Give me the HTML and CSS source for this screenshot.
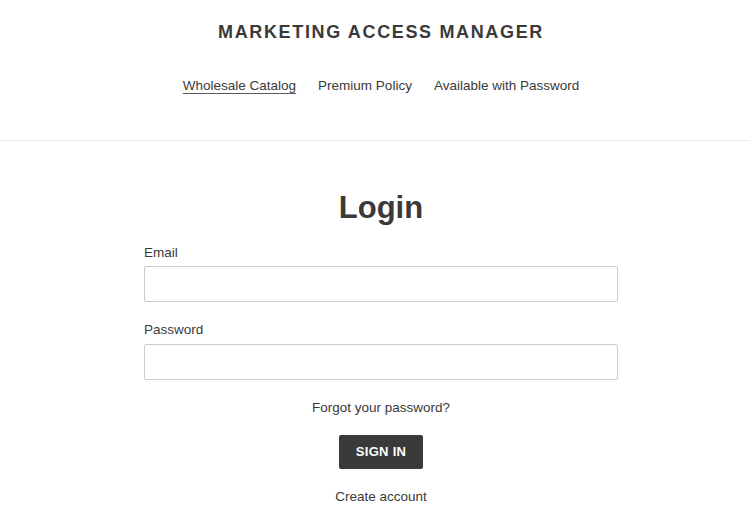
FILE: index.html
```html
<!DOCTYPE html>
<html>
<head>
    <meta charset="UTF-8">
    <link rel="stylesheet" href="styles.css">
</head>
<body>
    <div class="site-header">
        <div class="site-title">MARKETING ACCESS MANAGER</div>
        <nav class="site-nav">
            <a href="#" class="active">Wholesale Catalog</a>
            <a href="#">Premium Policy</a>
            <a href="#">Available with Password</a>
        </nav>
    </div>

    <div class="page">
        <h1>Login</h1>
        <form class="login-form" onsubmit="return false">
            <label for="email">Email</label>
            <input id="email" type="email"/>
            <label for="password">Password</label>
            <input id="password" type="password"/>
            <a href="#" class="forgot">Forgot your password?</a>
            <button type="submit" class="btn">SIGN IN</button>
            <a href="#" class="create">Create account</a>
        </form>
    </div>
</body>
</html>
```

FILE: styles.css
```css
body {
    font-family: "Liberation Sans", Arial, sans-serif;
    color: #3a3a3a;
    background-color: #fff;
    margin: 0;
    font-size: 13.5px;
}
a {
    color: #3a3a3a;
    text-decoration: none;
}
.site-header {
    padding: 19px 0 44px 12px;
    border-bottom: 1px solid #ebebeb;
    text-align: center;
}
.site-title {
    font-size: 18px;
    line-height: 27px;
    font-weight: bold;
    letter-spacing: 1.65px;
}
.site-nav {
    margin-top: 30px;
    display: flex;
    justify-content: center;
    gap: 22px;
    line-height: 20px;
}
.site-nav a.active {
    text-decoration: underline;
    text-underline-offset: 3px;
    text-decoration-color: #5a5a5a;
}
.page {
    padding-left: 12px;
    display: flex;
    flex-direction: column;
    align-items: center;
}
h1 {
    font-size: 31px;
    line-height: 38px;
    margin: 48px 0 16px;
}
.login-form {
    width: 474px;
    display: flex;
    flex-direction: column;
}
label {
    line-height: 20px;
    margin-bottom: 3px;
}
input {
    height: 36px;
    box-sizing: border-box;
    border: 1px solid #cccccc;
    border-radius: 2px;
    padding: 8px 10px;
    font-size: 14px;
    margin-bottom: 18px;
}
#password {
    margin-top: 1px;
}
.forgot, .create {
    align-self: center;
    line-height: 20px;
}
.btn {
    align-self: center;
    margin: 17px 0 18px;
    height: 34px;
    padding: 0 17px;
    background-color: #3a3a3a;
    color: #fff;
    border: none;
    border-radius: 2px;
    font-family: "Liberation Sans", Arial, sans-serif;
    font-size: 13px;
    font-weight: bold;
    letter-spacing: 0.3px;
    line-height: 32px;
    cursor: pointer;
}
```
